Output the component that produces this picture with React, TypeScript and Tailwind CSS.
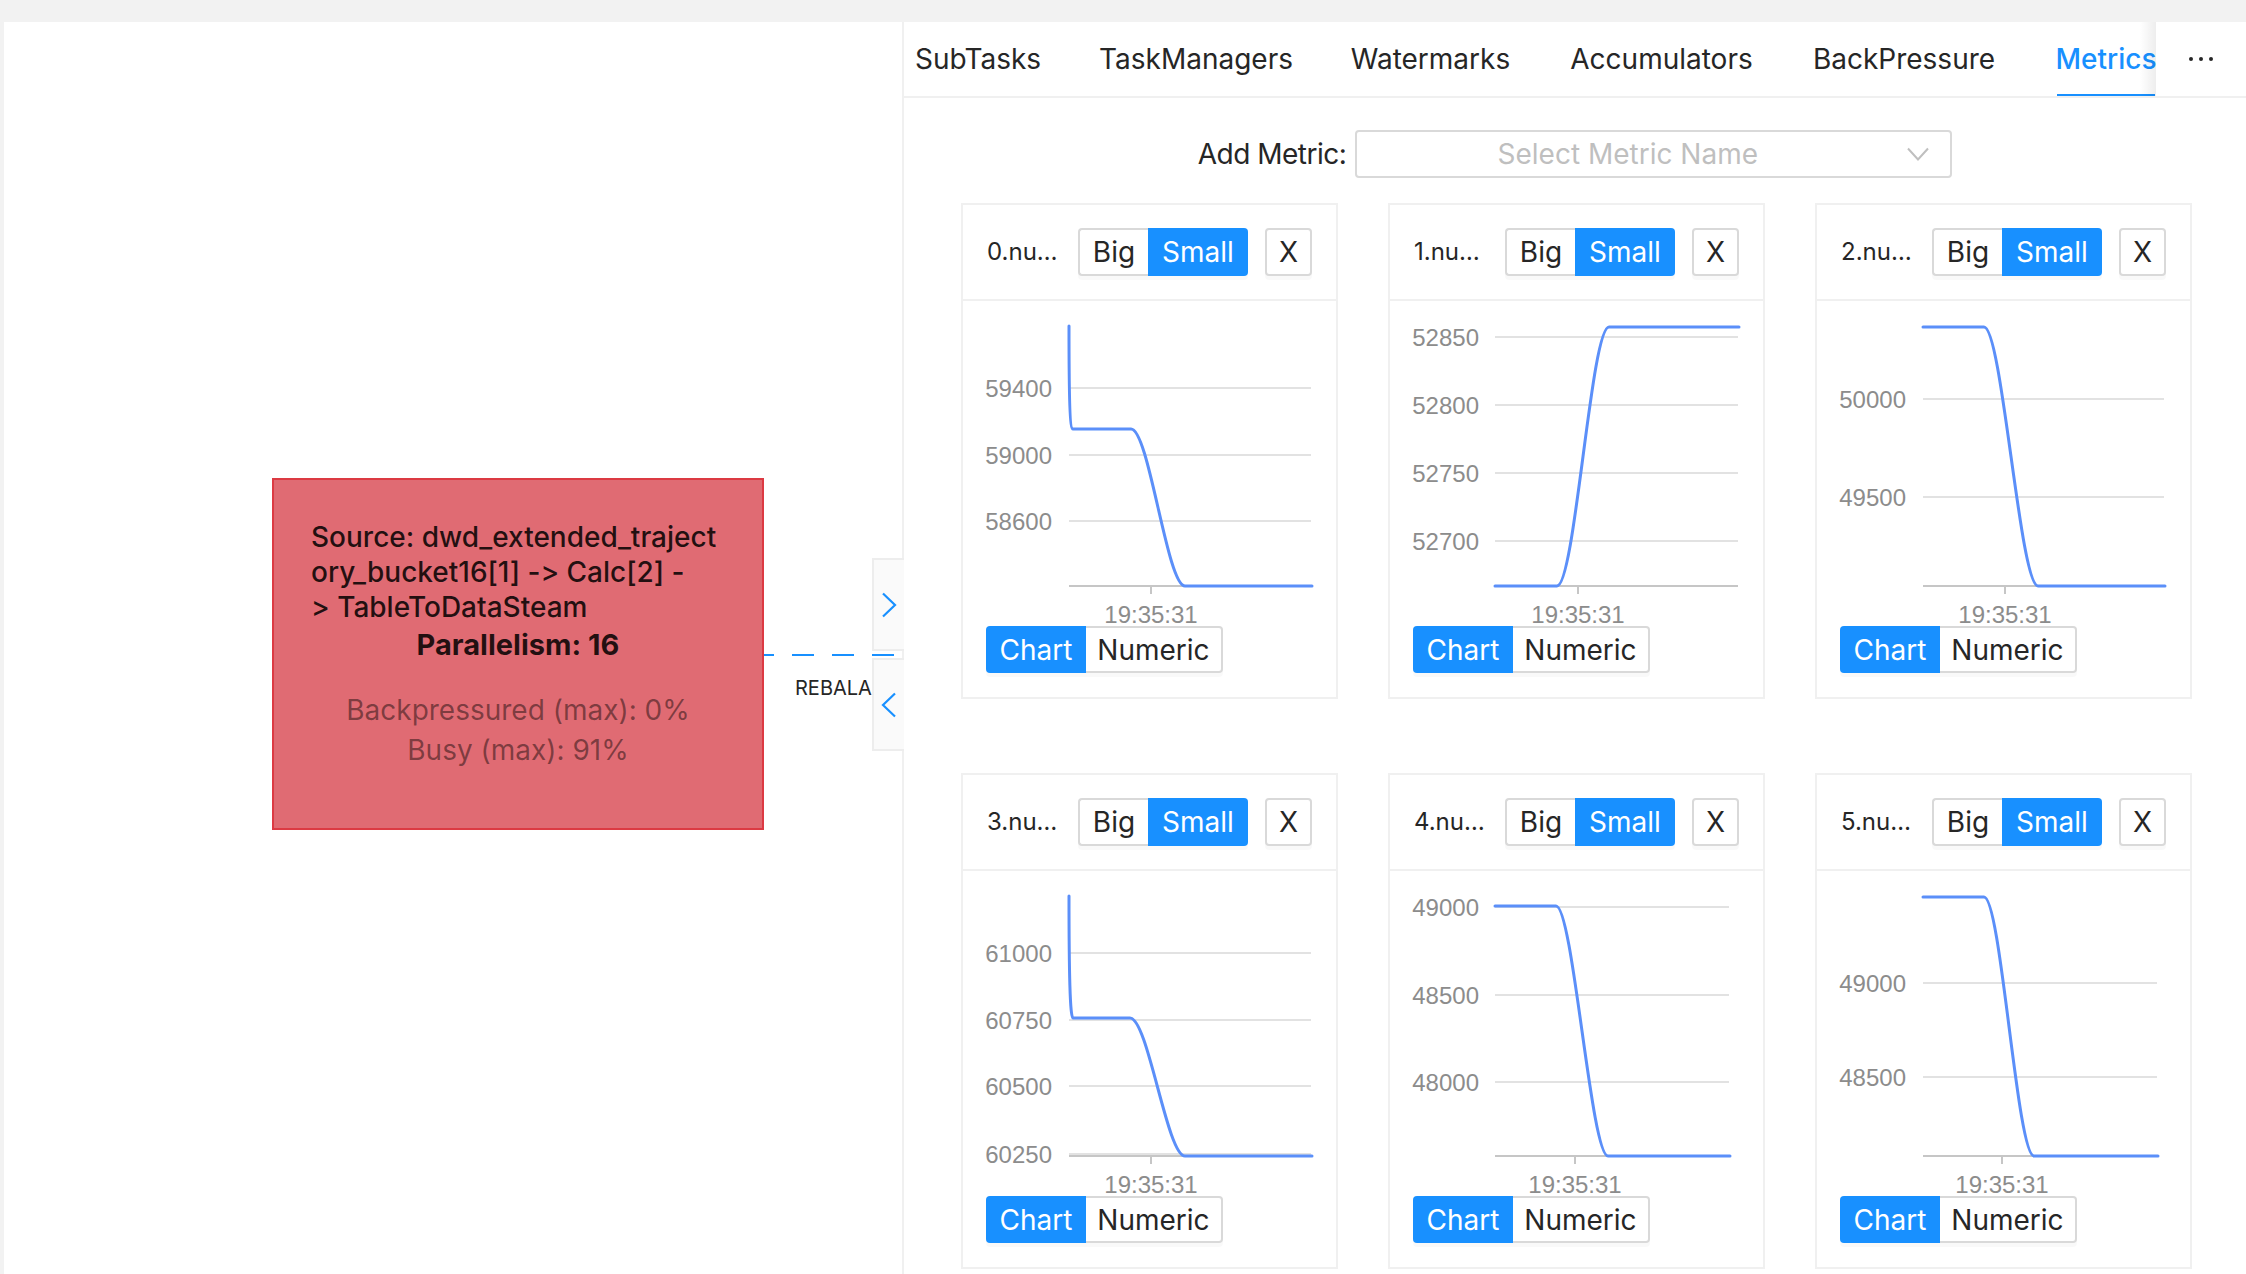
import React from "react";

type Label = { v: string; y: number };
type ChartCfg = {
  title: string;
  labels: Label[];
  gs: number;
  ge: number;
  tick: number;
  path: string;
};

const charts: ChartCfg[] = [
  {
    title: "0.nu…",
    labels: [
      { v: "59400", y: 87 },
      { v: "59000", y: 154 },
      { v: "58600", y: 220 },
    ],
    gs: 106,
    ge: 348,
    tick: 188,
    path: "M106 25 C106 100 107 128 110 128 L168 128 C186 128 204 285 222 285 L349 285",
  },
  {
    title: "1.nu…",
    labels: [
      { v: "52850", y: 36 },
      { v: "52800", y: 104 },
      { v: "52750", y: 172 },
      { v: "52700", y: 240 },
    ],
    gs: 105,
    ge: 348,
    tick: 188,
    path: "M105 285 L167 285 C185 285 201 26 219 26 L349 26",
  },
  {
    title: "2.nu…",
    labels: [
      { v: "50000", y: 98 },
      { v: "49500", y: 196 },
    ],
    gs: 106,
    ge: 347,
    tick: 188,
    path: "M106 26 L167 26 C185 26 203 285 221 285 L348 285",
  },
  {
    title: "3.nu…",
    labels: [
      { v: "61000", y: 82 },
      { v: "60750", y: 149 },
      { v: "60500", y: 215 },
      { v: "60250", y: 283 },
    ],
    gs: 106,
    ge: 348,
    tick: 188,
    path: "M106 25 C106 100 107 147 110 147 L167 147 C185 147 204 285 222 285 L349 285",
  },
  {
    title: "4.nu…",
    labels: [
      { v: "49000", y: 36 },
      { v: "48500", y: 124 },
      { v: "48000", y: 211 },
    ],
    gs: 105,
    ge: 339,
    tick: 185,
    path: "M105 35 L166 35 C183 35 201 285 218 285 L340 285",
  },
  {
    title: "5.nu…",
    labels: [
      { v: "49000", y: 112 },
      { v: "48500", y: 206 },
    ],
    gs: 106,
    ge: 340,
    tick: 185,
    path: "M106 26 L167 26 C184 26 200 285 217 285 L341 285",
  },
];

const tabs = [
  { t: "SubTasks", w: "w-[120px]" },
  { t: "TaskManagers", w: "w-[186px]" },
  { t: "Watermarks", w: "w-[153px]" },
  { t: "Accumulators", w: "w-[179px]" },
  { t: "BackPressure", w: "w-[176px]" },
];

function ChartSvg({ c }: { c: ChartCfg }) {
  const font = "'Liberation Sans', Arial, sans-serif";
  return (
    <svg width="373" height="325" className="block shrink-0">
      {c.labels.map((l) => (
        <line
          key={"g" + l.v}
          x1={c.gs}
          x2={c.ge}
          y1={l.y}
          y2={l.y}
          stroke="#e2e2e2"
          strokeWidth="2"
        />
      ))}
      <line x1={c.gs} x2={c.ge} y1={285} y2={285} stroke="#c6c6c6" strokeWidth="2" />
      <line x1={c.tick} x2={c.tick} y1={285} y2={293} stroke="#c6c6c6" strokeWidth="2" />
      {c.labels.map((l) => (
        <text
          key={"t" + l.v}
          x={89}
          y={l.y}
          textAnchor="end"
          dominantBaseline="central"
          fontSize="24"
          fill="#8c8c8c"
          fontFamily={font}
        >
          {l.v}
        </text>
      ))}
      <text
        x={c.tick}
        y={313}
        textAnchor="middle"
        dominantBaseline="central"
        fontSize="24"
        fill="#8c8c8c"
        fontFamily={font}
      >
        19:35:31
      </text>
      <path
        d={c.path}
        fill="none"
        stroke="#5b8ff9"
        strokeWidth="3"
        strokeLinejoin="round"
        strokeLinecap="round"
      />
    </svg>
  );
}

function MetricCard({ c }: { c: ChartCfg }) {
  return (
    <div className="w-[377px] h-[496px] border-2 border-[#f0f0f0] bg-white flex flex-col">
      <div className="h-[96px] shrink-0 border-b-2 border-[#f0f0f0] flex items-center pl-[24px] pr-[24px]">
        <div className="flex-1 text-[24px] text-[#262626] whitespace-nowrap">{c.title}</div>
        <div className="flex h-[48px] rounded-[4px] shadow-[0_4px_0_rgba(0,0,0,0.025)]">
          <div className="w-[70px] h-full border-2 border-r-0 border-[#d9d9d9] rounded-l-[4px] bg-white flex items-center justify-center text-[28px] text-[#262626]">
            Big
          </div>
          <div className="w-[100px] h-full bg-[#1890ff] rounded-r-[4px] flex items-center justify-center text-[28px] text-white">
            Small
          </div>
        </div>
        <div className="ml-[17px] w-[47px] h-[48px] border-2 border-[#d9d9d9] rounded-[4px] bg-white flex items-center justify-center text-[28px] text-[#262626] shadow-[0_4px_0_rgba(0,0,0,0.025)]">
          X
        </div>
      </div>
      <div className="flex-1 flex flex-col">
        <ChartSvg c={c} />
        <div className="ml-[23px] flex h-[47px] shadow-[0_4px_0_rgba(0,0,0,0.025)] w-fit rounded-[4px]">
          <div className="w-[100px] h-full bg-[#1890ff] rounded-l-[4px] flex items-center justify-center text-[28px] text-white">
            Chart
          </div>
          <div className="w-[137px] h-full border-2 border-l-0 border-[#d9d9d9] rounded-r-[4px] bg-white flex items-center justify-center text-[28px] text-[#262626]">
            Numeric
          </div>
        </div>
      </div>
    </div>
  );
}

export default function App() {
  return (
    <div className="w-[2246px] h-[1274px] bg-[#f2f2f2] pt-[22px] pl-[4px] flex overflow-hidden font-['Inter',sans-serif] [font-feature-settings:'calt'_0,'liga'_0] [font-variant-ligatures:none]">
      {/* DAG canvas */}
      <div className="w-[898px] h-full bg-white relative overflow-hidden shrink-0">
        <div className="absolute left-[268px] top-[456px] w-[492px] h-[352px] bg-[#e06b73] border-2 border-[#dc3a43] pt-[40px] text-black/85">
          <div className="pl-[37px] text-[28px] font-medium">
            <div className="h-[35px] leading-[35px] whitespace-nowrap">Source: dwd_extended_traject</div>
            <div className="h-[35px] leading-[35px] whitespace-nowrap">ory_bucket16[1] -&gt; Calc[2] -</div>
            <div className="h-[35px] leading-[35px] whitespace-nowrap">&gt; TableToDataSteam</div>
          </div>
          <div className="h-[40px] leading-[40px] text-center text-[29px] font-bold">Parallelism: 16</div>
          <div className="mt-[25px] text-center text-[28px] text-black/45">
            <div className="h-[40px] leading-[40px]">Backpressured (max): 0%</div>
            <div className="h-[40px] leading-[40px]">Busy (max): 91%</div>
          </div>
        </div>
        <svg className="absolute left-[760px] top-[631px]" width="140" height="4">
          <line x1="0" y1="2" x2="140" y2="2" stroke="#1890ff" strokeWidth="2" strokeDasharray="22 18" strokeDashoffset="12" />
        </svg>
        <div className="absolute left-[791px] top-[654px] h-[24px] leading-[24px] text-[20px] text-[#262626] whitespace-nowrap">
          REBALANCE
        </div>
      </div>

      {/* Drawer */}
      <div className="flex-1 h-full bg-white border-l-2 border-[#f0f0f0] relative flex flex-col">
        <div className="absolute left-[-32px] top-[536px] w-[32px] h-[93px] bg-[#fafafa] border-2 border-r-0 border-[#ededed] flex items-center justify-center">
          <svg width="16" height="26" viewBox="0 0 16 26">
            <path d="M2 1.5 L14 13 L2 24.5" fill="none" stroke="#1890ff" strokeWidth="2.2" />
          </svg>
        </div>
        <div className="absolute left-[-32px] top-[636px] w-[32px] h-[93px] bg-[#fafafa] border-2 border-r-0 border-[#ededed] flex items-center justify-center">
          <svg width="16" height="26" viewBox="0 0 16 26">
            <path d="M14 1.5 L2 13 L14 24.5" fill="none" stroke="#1890ff" strokeWidth="2.2" />
          </svg>
        </div>

        {/* Tabs */}
        <div className="h-[76px] shrink-0 border-b-2 border-[#f0f0f0] flex">
          <div className="w-[1252px] h-full relative overflow-hidden flex pl-[14px]">
            {tabs.map((t) => (
              <div
                key={t.t}
                className={`${t.w} mr-[65px] shrink-0 h-full flex items-center justify-center text-[28px] text-[#262626] whitespace-nowrap`}
              >
                {t.t}
              </div>
            ))}
            <div className="w-[98px] shrink-0 h-full relative flex items-center justify-center text-[28px] text-[#1890ff] font-medium whitespace-nowrap">
              Metrics
              <span className="absolute left-0 right-0 bottom-[-2px] h-[4px] bg-[#1890ff]" />
            </div>
            <div className="absolute right-0 top-0 bottom-0 w-[16px] bg-[linear-gradient(to_right,rgba(0,0,0,0),rgba(0,0,0,0.07))]" />
          </div>
          <div className="flex-1 h-full flex items-center justify-center">
            <svg width="26" height="6" viewBox="0 0 26 6">
              <circle cx="3" cy="3" r="2" fill="#262626" />
              <circle cx="13" cy="3" r="2" fill="#262626" />
              <circle cx="23" cy="3" r="2" fill="#262626" />
            </svg>
          </div>
        </div>

        {/* Add metric */}
        <div className="mt-[32px] flex items-center justify-center gap-[9px]">
          <div className="text-[28px] tracking-[-0.5px] text-[#262626] whitespace-nowrap">Add Metric:</div>
          <div className="w-[597px] h-[48px] border-2 border-[#d9d9d9] rounded-[4px] relative flex items-center justify-center pr-[52px] text-[28px] text-[#bfbfbf]">
            Select Metric Name
            <svg className="absolute right-[21px] top-[15px]" width="22" height="14" viewBox="0 0 22 14">
              <path d="M1 1.5 L11 12.5 L21 1.5" fill="none" stroke="#bfbfbf" strokeWidth="2" />
            </svg>
          </div>
        </div>

        {/* Cards */}
        <div className="mt-[25px] pl-[57px] grid grid-cols-[377px_377px_377px] gap-x-[50px] gap-y-[74px]">
          {charts.map((c) => (
            <MetricCard key={c.title} c={c} />
          ))}
        </div>
      </div>
    </div>
  );
}
